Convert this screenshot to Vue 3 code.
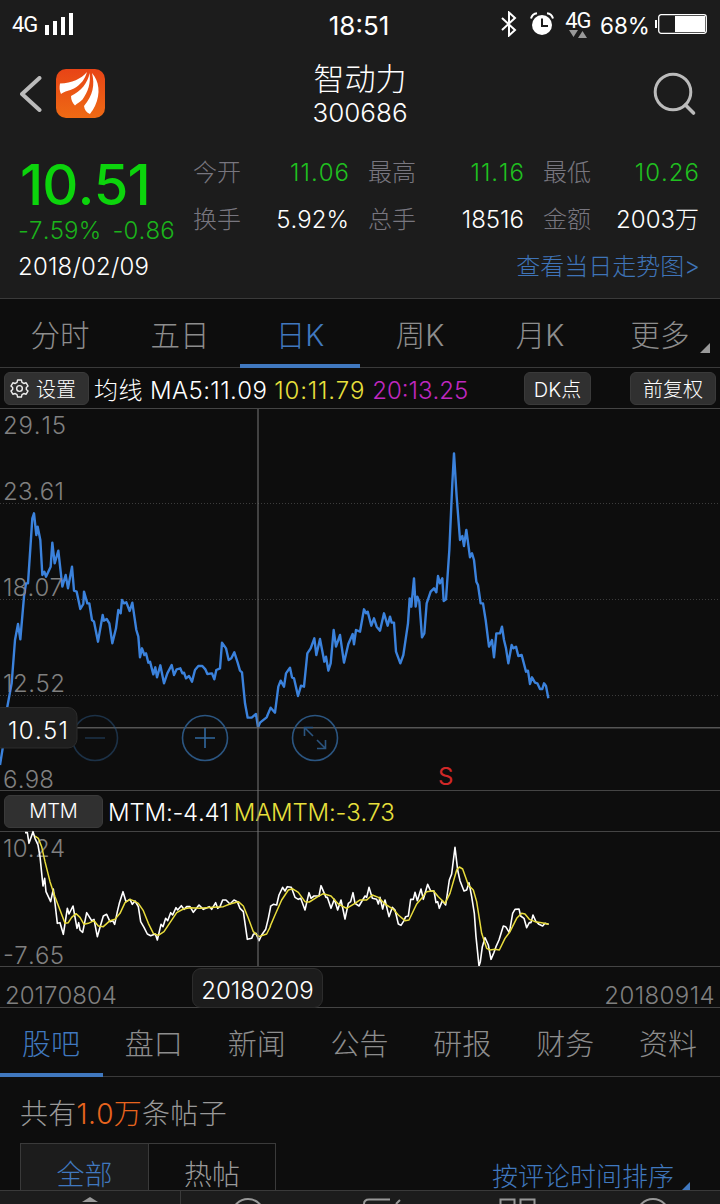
<template>
  <div class="page">
    <section class="top">
      <div class="status">
        <span class="net">4G</span>
        <svg class="bars" width="29" height="22" viewBox="0 0 29 22">
          <path d="M0 12h4v10H0zM8 8h4v14H8zM16 4h4v18h-4zM24 0h4v22h-4z" fill="#fff" />
        </svg>
        <span class="clock">18:51</span>
        <svg class="bt" width="16" height="26" viewBox="0 0 16 26">
          <path d="M1 7l13 12-6 5.500V1.500L14 7 1 19" fill="none" stroke="#fff" stroke-width="2" />
        </svg>
        <svg class="alarm" width="24" height="24" viewBox="0 0 24 24">
          <circle cx="12" cy="13" r="10" fill="#fff" />
          <path d="M1 6.500C2 3 4 1.500 7 1.200M23 6.500C22 3 20 1.500 17 1.200" fill="none" stroke="#fff" stroke-width="2" />
          <path d="M12 6.500V14h6" fill="none" stroke="#1c1c1c" stroke-width="2" />
        </svg>
        <span class="net2">
          <span>4G</span>
          <svg width="18" height="8" viewBox="0 0 18 8">
            <path d="M0 0h9L4.500 7zM9 8h9L13.500 1z" fill="#999" />
          </svg>
        </span>
        <span class="percent">68%</span>
        <svg class="battery" width="53" height="20" viewBox="0 0 53 20">
          <path d="M0 6h2v8H0z" fill="#fff" />
          <rect x="3.700" y=".7" width="47.600" height="18.600" rx="2.500" fill="none" stroke="#fff" stroke-width="1.300" />
          <path d="M20 2h30v16H20z" fill="#fff" />
        </svg>
      </div>

      <header class="header">
        <svg class="back" width="22" height="36" viewBox="0 0 22 36">
          <path d="M19.500 2L2 18l17.500 16" fill="none" stroke="#bbb" stroke-width="4" stroke-linecap="round" stroke-linejoin="round" />
        </svg>
        <svg class="logo" width="49" height="49" viewBox="0 0 49 49">
          <defs>
            <linearGradient id="logoBg" x1="0" y1="0" x2="0" y2="1">
              <stop offset="0" stop-color="#e84416" />
              <stop offset="1" stop-color="#ee6a14" />
            </linearGradient>
          </defs>
          <rect width="49" height="49" rx="10" fill="url(#logoBg)" />
          <path d="M31 3C25 10 16 14 4 14.500c-.8 4-.5 7 1 10.500 4-3 8-3 13-5.500C25 15.500 29 10 31 3z" fill="#fff" />
          <path d="M33.500 4C32 14 25 22 15 27c0 4 1.500 7 4 9.500 2-2.500 5-3 7.500-6C32 23 35 14 33.500 4z" fill="#fff" />
          <path d="M36 4c3 12 1 22-8 33 .5 4 2.500 6.500 6 8 2-3 3-4 5-8C45 24 43 12 36 4z" fill="#fff" />
        </svg>
        <div class="title">
          <div class="name">智动力</div>
          <div class="code">300686</div>
        </div>
        <svg class="search" width="44" height="44" viewBox="0 0 44 44">
          <circle cx="20" cy="20" r="17.800" fill="none" stroke="#bbb" stroke-width="3" />
          <path d="M32.500 33l8 8" stroke="#bbb" stroke-width="3.600" stroke-linecap="round" />
        </svg>
      </header>

      <div class="quote">
        <div class="price-box">
          <div class="price">10.51</div>
          <div class="change"><span>-7.59%</span><span>-0.86</span></div>
        </div>
        <div class="stats">
          <div v-for="s in stats" :key="s.label" class="stat">
            <span class="label">{{ s.label }}</span>
            <span :class="{ down: s.down }">{{ s.value }}</span>
          </div>
        </div>
      </div>
      <div class="day">
        <span class="date">2018/02/09</span>
        <a class="link">查看当日走势图&gt;</a>
      </div>
    </section>

    <nav class="tabs">
      <a v-for="t in periods" :key="t" :class="{ active: t === period }" @click="period = t">
        {{ t }}<i v-if="t === '更多'" class="corner"></i>
      </a>
    </nav>

    <div class="chart">
      <div class="bar">
        <button class="btn setting">
          <svg width="19" height="19" viewBox="0 0 20 20" fill="none" stroke="#eee" stroke-width="1.500" stroke-linejoin="round">
            <path d="M8 1h4l.6 2.600 1.900 1.100L17 4l2 3.400L17.200 9v2l1.800 1.600L17 16l-2.500-.7-1.900 1.100L12 19H8l-.6-2.600-1.900-1.100L3 16l-2-3.400L2.800 11V9L1 7.400 3 4l2.500.7 1.900-1.100z" />
            <circle cx="10" cy="10" r="3" />
          </svg>
          <span>设置</span>
        </button>
        <div class="ma">
          <span class="ma5">均线 MA5:11.09</span>
          <span class="ma10 yellow">10:11.79</span>
          <span class="purple">20:13.25</span>
        </div>
        <button class="btn dk">DK点</button>
        <button class="btn fq">前复权</button>
      </div>

      <svg class="main" width="720" height="381" viewBox="0 409 720 381">
        <g stroke="#3c3c3c" stroke-dasharray="1 2">
          <path d="M0 503.500h720M0 599.500h720M0 695.500h720" />
        </g>
        <g class="line" stroke="#3b82dc" stroke-width="2.400">
          <polyline transform="translate(0 440) scale(.33333)" :points="priceBefore" />
          <polyline transform="translate(220 440) scale(.33333)" :points="priceAfter" />
        </g>
        <g class="axis">
          <text x="3" y="434" textLength="63">29.15</text>
          <text x="3" y="500" textLength="61">23.61</text>
          <text x="3" y="596" textLength="60">18.07</text>
          <text x="3" y="692" textLength="62">12.52</text>
          <text x="3" y="788" textLength="51">6.98</text>
        </g>
        <path d="M0 727.800h720" stroke="#555" stroke-width="1.500" />
        <g fill="none" stroke="#2b5580" stroke-width="1.600">
          <g opacity=".5">
            <circle cx="95" cy="738" r="22.500" />
            <path d="M85 738h20" />
          </g>
          <circle cx="205" cy="738" r="22.500" />
          <path d="M195 738h20M205 728v20" stroke="#31689f" />
          <circle cx="315" cy="738" r="22.500" />
          <path d="M313 736l-8-8M304.500 736v-8.500h8.500M317 740l8 8M317 748.500h8.500V740" />
        </g>
        <text class="sell" x="438" y="785">S</text>
        <rect x="-8" y="707.500" width="85" height="40.500" rx="9" fill="#1e1e1e" stroke="#2c2c2c" />
        <text class="cur" x="8" y="739" textLength="60">10.51</text>
      </svg>

      <div class="bar mtm-bar">
        <button class="btn mtm">MTM</button>
        <div class="ma">
          <span>MTM:-4.41</span>
          <span class="yellow">MAMTM:-3.73</span>
        </div>
      </div>

      <svg class="sub" width="720" height="134" viewBox="0 832 720 134">
        <g class="axis">
          <text x="3" y="857" textLength="62">10.24</text>
          <text x="3" y="964" textLength="61">-7.65</text>
        </g>
        <g class="line" stroke="#fff" stroke-width="1.600">
          <polyline transform="translate(0 790) scale(.33333)" :points="mtmBefore" />
          <polyline transform="translate(270 790) scale(.33333)" :points="mtmAfter" />
        </g>
        <g class="line" stroke="#e8dc3c" stroke-width="1.500">
          <polyline transform="translate(0 790) scale(.33333)" :points="avgBefore" />
          <polyline transform="translate(270 790) scale(.33333)" :points="avgAfter" />
        </g>
      </svg>
      <div class="cross"></div>

      <div class="dates">
        <span>20170804</span>
        <span class="end">20180914</span>
        <b class="date-tag">20180209</b>
      </div>
    </div>

    <nav class="tabs small">
      <a v-for="t in sections" :key="t" :class="{ active: t === section }" @click="section = t">{{ t }}</a>
    </nav>

    <section class="posts">
      <p class="count">共有<em>1.0万</em>条帖子</p>
      <div class="filter">
        <a class="on">全部</a>
        <a>热帖</a>
        <span class="sort">按评论时间排序<i class="corner"></i></span>
      </div>
    </section>

    <footer class="bottom">
      <div class="first">
        <svg width="20" height="13" viewBox="0 0 20 13"><path d="M10 6l8 5H2z" fill="#999" /></svg>
      </div>
      <div>
        <svg width="40" height="13" viewBox="0 0 40 13"><circle cx="20" cy="24" r="16" /></svg>
      </div>
      <div>
        <svg width="40" height="13" viewBox="0 0 40 13"><path d="M1 13c0-3 2-4.500 5-4.500h21M33 13l4-4" /></svg>
      </div>
      <div>
        <svg width="40" height="13" viewBox="0 0 40 13"><path d="M2.500 14V8.500h14V14M22.500 14V8.500h14V14" /></svg>
      </div>
      <div>
        <svg width="40" height="13" viewBox="0 0 40 13"><circle cx="20" cy="24" r="16" /></svg>
      </div>
    </footer>
  </div>
</template>

<script setup>
import { ref } from 'vue'

const stats = [
  { label: '今开', value: '11.06', down: true },
  { label: '最高', value: '11.16', down: true },
  { label: '最低', value: '10.26', down: true },
  { label: '换手', value: '5.92%' },
  { label: '总手', value: '18516' },
  { label: '金额', value: '2003万' },
]

const periods = ['分时', '五日', '日K', '周K', '月K', '更多']
const period = ref('日K')

const sections = ['股吧', '盘口', '新闻', '公告', '研报', '财务', '资料']
const section = ref('股吧')

// each series is split at the selected day
const priceBefore = '0,975 8,925 22,800 35,730 45,600 54,552 61,598 72,470 78,430 84,430 97,235 102,220 109,285 113,260 121,300 127,405 133,395 138,410 152,380 157,308 164,370 175,332 187,440 197,405 204,445 216,380 222,452 230,455 241,507 250,492 252,455 262,490 268,490 276,540 282,545 294,605 308,525 312,542 320,537 328,550 337,610 348,565 355,510 362,520 366,480 372,490 379,487 389,513 397,488 409,570 415,590 420,652 426,625 433,645 438,640 445,668 450,665 460,703 466,682 471,712 481,676 492,730 502,700 515,675 522,705 530,688 541,685 547,700 552,698 558,715 567,708 576,725 585,690 595,678 607,678 616,688 622,702 636,700 643,718 649,690 660,685 666,608 678,625 686,660 694,655 703,637 713,668 720,692 726,697 735,790 743,833 755,833 768,822 774,862'
const priceAfter = '114,862 120,848 140,832 152,803 165,818 175,740 182,722 192,740 198,700 210,683 216,712 222,715 234,768 243,737 252,740 262,640 272,625 283,595 289,645 300,597 313,665 318,650 325,692 332,670 341,570 348,620 360,585 372,668 385,612 398,582 402,613 408,570 420,575 432,508 438,520 443,515 454,557 462,535 470,560 480,572 492,520 503,557 510,530 515,548 522,548 528,635 541,670 550,645 564,550 569,475 574,500 582,415 587,500 592,470 598,485 606,592 613,580 620,490 632,455 642,445 649,457 654,408 660,430 667,415 671,483 678,478 688,330 697,130 702,40 710,170 720,300 727,288 732,318 739,270 750,352 756,340 762,360 769,425 774,435 782,490 789,490 797,540 807,620 816,600 822,652 829,580 840,580 846,560 852,600 858,625 865,670 875,615 880,625 888,620 895,648 905,645 918,695 924,692 930,732 936,712 945,728 952,730 960,747 967,747 972,730 978,738 985,775'
const mtmBefore = '75,128 82,128 87,160 99,125 105,145 114,165 120,200 129,288 134,265 138,305 152,335 160,297 172,400 180,398 190,433 202,355 207,372 219,348 231,415 236,398 240,420 248,427 260,368 275,392 282,388 292,440 300,412 310,378 320,373 330,395 338,392 344,403 352,365 358,340 369,305 378,335 390,328 397,343 405,333 415,350 422,395 432,412 442,432 452,437 466,432 472,450 483,403 489,410 497,385 503,392 512,368 518,375 528,353 533,360 544,347 552,358 560,350 570,350 580,367 597,345 610,358 628,350 635,358 647,338 653,355 660,350 668,330 678,330 690,342 702,330 712,335 720,355 730,365 742,448 755,445 760,433 768,430 777,452 785,435 797,418 805,385 812,350'
const mtmAfter = '0,350 10,343 20,345 27,315 38,292 45,303 52,290 64,292 75,322 85,328 92,325 105,360 117,308 123,325 132,318 147,318 153,287 168,322 172,322 183,355 193,328 203,360 213,330 225,387 235,340 242,335 249,308 255,340 267,348 285,318 290,322 297,292 307,325 320,328 325,342 330,322 338,357 345,330 357,380 367,352 375,360 385,402 393,406 402,392 407,380 415,378 422,328 430,328 435,307 442,332 453,297 460,328 473,283 482,303 492,303 498,338 503,335 508,355 517,332 527,345 538,270 545,252 555,172 563,240 570,272 582,303 590,300 597,278 605,320 613,370 618,440 627,528 631,515 637,470 645,443 655,465 663,508 672,487 678,470 687,450 700,408 707,410 718,428 728,370 735,358 747,357 752,378 762,385 770,413 778,398 783,398 789,375 797,393 807,403 818,408 825,400 836,403'
const avgBefore = '105,138 115,145 125,170 135,215 150,275 165,320 180,360 195,400 205,398 215,382 228,371 240,382 252,403 265,400 282,392 295,408 310,410 330,392 345,388 360,370 375,338 390,328 400,332 415,340 430,362 445,400 460,430 475,436 492,425 510,398 530,368 550,357 570,353 600,355 640,352 670,350 690,342 715,335 730,348 745,385 760,425 777,440 800,432 812,408'
const avgAfter = '0,410 15,375 35,330 55,300 67,296 85,307 105,335 118,336 140,322 160,311 183,318 205,342 230,355 255,340 270,330 290,330 307,315 325,322 345,342 370,358 385,375 405,392 417,390 440,342 455,325 470,305 490,302 505,320 525,340 540,310 560,240 568,231 578,237 595,285 610,300 620,335 635,430 650,475 660,480 675,478 688,480 705,445 720,425 740,385 755,370 765,372 778,388 795,395 815,398 836,403'
</script>

<style>
body {
  background: #0d0d0d;
}
</style>

<style scoped>
* {
  box-sizing: border-box;
}

.page {
  width: 720px;
  height: 1204px;
  overflow: hidden;
  display: flex;
  flex-direction: column;
  background: #0d0d0d;
  color: #fff;
  font-family: Inter, 'Noto Sans CJK SC', sans-serif;
  font-weight: 300;
  font-size: 24px;
  font-kerning: none;
  white-space: nowrap;
}

svg {
  display: block;
  flex: none;
}

.top {
  flex: none;
  height: 299px;
  background: #1c1c1c;
  border-bottom: 1px solid #3a3a3a;
}

.status {
  height: 48px;
  padding: 0 12px;
  display: flex;
  align-items: center;
  font-weight: 400;
}

.net {
  width: 33px;
  font-family: Roboto, sans-serif;
  font-size: 22px;
  letter-spacing: -1px;
}

.clock {
  width: 62px;
  margin-left: 255px;
  margin-top: 3px;
  font-size: 26px;
}

.bt {
  margin-left: 111px;
}

.alarm {
  margin-left: 13px;
}

.net2 {
  width: 28px;
  margin-left: 11px;
  font-family: Roboto, sans-serif;
  font-size: 22px;
  line-height: 22px;
  letter-spacing: -1px;
}

.net2 svg {
  margin: -2px 0 0 4px;
}

.percent {
  width: 49px;
  margin-left: 7px;
  margin-top: 2px;
  font-size: 22.500px;
}

.battery {
  margin-left: 6px;
}

.header {
  height: 97px;
  padding: 0 23px 6px 20px;
  display: flex;
  align-items: center;
}

.logo {
  margin-left: 14px;
}

.title {
  flex: 1;
  padding-right: 38px;
  text-align: center;
}

.name {
  font-size: 31px;
  line-height: 36px;
  margin-top: 2px;
}

.code {
  font-size: 26px;
  line-height: 32px;
}

.quote {
  display: flex;
  height: 100px;
}

.price-box {
  width: 193px;
  padding-left: 18px;
}

.price {
  padding: 9px 0 0 2px;
  font-size: 56px;
  line-height: 63px;
  letter-spacing: -0.9px;
  font-weight: 500;
  color: #0cd40c;
}

.change {
  display: flex;
  gap: 11px;
  line-height: 28px;
  letter-spacing: 0.2px;
  color: #1bb31b;
}

.stats {
  display: grid;
  grid-template-columns: repeat(3, 156px);
  grid-auto-rows: 47px;
  column-gap: 19px;
  padding-top: 4px;
}

.stat {
  display: flex;
  justify-content: space-between;
  line-height: 47px;
}

.label {
  color: #78767f;
}

.down {
  margin-right: -1px;
  letter-spacing: 1px;
  color: #20c020;
}

.day {
  display: flex;
  justify-content: space-between;
  padding: 0 20px 0 18px;
  line-height: 43px;
}

.date {
  letter-spacing: 0.2px;
}

.link {
  color: #3f74b8;
}

.tabs {
  flex: none;
  display: flex;
  height: 69px;
  border-bottom: 1px solid #3a3a3a;
}

.tabs a {
  position: relative;
  flex: 1;
  height: 69px;
  text-align: center;
  font-size: 29.500px;
  line-height: 72px;
  color: #8d8d8d;
}

.tabs a.active {
  color: #4078bf;
  border-bottom: 4px solid #4078bf;
}

.corner {
  position: absolute;
  right: 10px;
  bottom: 15px;
  border-left: 10px solid transparent;
  border-bottom: 10px solid #999;
}

.chart {
  position: relative;
  flex: none;
  height: 640px;
}

.bar {
  display: flex;
  align-items: center;
  height: 41px;
  padding: 0 4px;
  border-bottom: 1px solid #444;
}

.mtm-bar {
  border-top: 1px solid #444;
  height: 42px;
}

.btn {
  display: flex;
  align-items: center;
  justify-content: center;
  height: 33px;
  padding: 0;
  border: 1px solid #3a3a3a;
  border-radius: 6px;
  background: #303030;
  color: #fff;
  font: inherit;
  font-size: 20px;
}

.setting {
  width: 85px;
  padding-right: 7px;
  gap: 7px;
}

.ma {
  display: flex;
  align-items: baseline;
  gap: 7px;
  margin-left: 5px;
  padding-top: 1px;
}

.ma5 {
  letter-spacing: 0.4px;
}

.ma10 {
  letter-spacing: 0.8px;
}

.mtm-bar .ma {
  gap: 5px;
  padding-top: 2px;
  letter-spacing: -0.2px;
}

.yellow {
  color: #e8e03c;
}

.purple {
  color: #c028c0;
}

.dk {
  width: 67px;
  margin-left: auto;
}

.fq {
  width: 86px;
  margin-left: 39px;
}

.mtm {
  width: 99px;
}

.line {
  fill: none;
  stroke-linejoin: round;
}

.line polyline {
  vector-effect: non-scaling-stroke;
}

.axis {
  fill: #808080;
}

.cur {
  fill: #fff;
}

.sell {
  fill: #d02828;
  font-weight: 400;
}

.main,
.sub {
  overflow: visible;
}

.cross {
  position: absolute;
  left: 257px;
  top: 41px;
  width: 2px;
  height: 558px;
  background: rgba(120, 120, 120, 0.5);
}

.dates {
  position: relative;
  display: flex;
  justify-content: space-between;
  height: 42px;
  padding: 0 5px;
  border-top: 1px solid #444;
  border-bottom: 1px solid #444;
  line-height: 57px;
  color: #808080;
}

.end {
  letter-spacing: 0.4px;
}

.date-tag {
  position: absolute;
  left: 192px;
  top: 1px;
  width: 131px;
  height: 40px;
  border: 1px solid #2c2c2c;
  border-radius: 9px;
  background: #1c1c1c;
  text-align: center;
  line-height: 44px;
  font-weight: 300;
  color: #fff;
}

.small a {
  font-size: 29px;
  line-height: 74px;
  padding-right: 1px;
}

.posts {
  flex: 1;
  min-height: 0;
  overflow: hidden;
  padding: 0 20px;
  font-size: 28px;
  color: #999;
}

.count {
  margin: 0;
  height: 66px;
  line-height: 74px;
  letter-spacing: 0.3px;
}

.count em {
  font-style: normal;
  color: #e8641e;
}

.filter {
  display: flex;
}

.filter a {
  width: 127px;
  height: 60px;
  border: 1px solid #3a3a3a;
  border-left: none;
  text-align: center;
  line-height: 62px;
}

.filter .on {
  width: 129px;
  border-left: 1px solid #3a3a3a;
  background: #1c1c1c;
  color: #4078bf;
}

.sort {
  position: relative;
  margin-left: auto;
  padding-right: 26px;
  font-size: 26px;
  line-height: 67px;
  color: #4078bf;
}

.sort .corner {
  bottom: auto;
  top: 39px;
  border-left-width: 8px;
  border-bottom: 8px solid #4078bf;
}

.bottom {
  position: relative;
  display: flex;
  height: 14px;
  flex: none;
  border-top: 1px solid #3a3a3a;
  background: #1c1c1c;
}

.bottom div {
  flex: 1;
  display: flex;
  justify-content: center;
}

.bottom .first {
  flex: none;
  width: 181px;
  border-right: 1px solid #3a3a3a;
}

.bottom svg {
  fill: none;
  stroke: #999;
  stroke-width: 2;
}

.bottom .first svg {
  stroke: none;
}
</style>
